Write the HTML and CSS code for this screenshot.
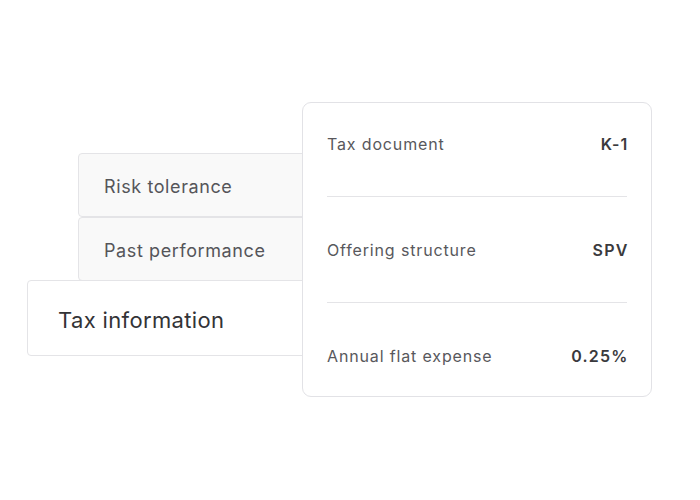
FILE: index.html
```html
<!DOCTYPE html>
<html>
<head>
<meta charset="utf-8">
<link rel="stylesheet" href="styles.css">
</head>
<body>
<div class="stage">
  <div class="tabs">
    <div class="tab tab-small">Risk tolerance</div>
    <div class="tab tab-small">Past performance</div>
    <div class="tab tab-active">Tax information</div>
  </div>
  <div class="card">
    <div class="row row-first"><span class="label">Tax document</span><span class="value">K-1</span></div>
    <div class="row"><span class="label">Offering structure</span><span class="value">SPV</span></div>
    <div class="row row-last"><span class="label">Annual flat expense</span><span class="value">0.25%</span></div>
  </div>
</div>
</body>
</html>
```
FILE: styles.css
```css
html, body {
  margin: 0;
  padding: 0;
  background: #ffffff;
}
body {
  font-family: Inter, "Noto Sans", sans-serif;
  width: 700px;
  height: 500px;
  overflow: hidden;
}
.stage {
  display: grid;
  grid-template-columns: 275px 18px 332px;
  padding: 102px 0 0 27px;
}
.tabs {
  grid-column: 1 / 3;
  grid-row: 1;
  margin-top: 51px;
  display: flex;
  flex-direction: column;
  align-items: flex-end;
}
.tab {
  box-sizing: border-box;
  border: 1px solid #e4e4e7;
  border-radius: 4px 0 0 4px;
  display: flex;
  align-items: center;
}
.tab-small {
  width: 242px;
  height: 64px;
  background: #f9f9f9;
  padding: 3px 0 0 25px;
  font-size: 18px;
  letter-spacing: 0.6px;
  color: #555559;
}
.tab-active {
  width: 293px;
  height: 76px;
  margin-top: -1px;
  background: #ffffff;
  padding: 4px 0 0 30px;
  font-size: 22px;
  letter-spacing: 0.35px;
  color: #333336;
}
.card {
  grid-column: 2 / 4;
  grid-row: 1;
  position: relative;
  z-index: 1;
  box-sizing: border-box;
  width: 350px;
  height: 295px;
  background: #ffffff;
  border: 1px solid #e2e2e6;
  border-radius: 9px;
  padding: 0 24px 0 24px;
  display: flex;
  flex-direction: column;
}
.row {
  display: flex;
  justify-content: space-between;
  align-items: center;
  height: 24px;
  padding: 41px 0 40px;
  border-bottom: 1px solid #e4e4e7;
  font-size: 16px;
  letter-spacing: 0.85px;
}
.row-first {
  padding-top: 29px;
}
.row-last {
  border-bottom: none;
  padding-bottom: 0;
}
.label {
  color: #58585c;
}
.value {
  color: #3a3a3d;
  font-weight: 600;
  letter-spacing: 1.2px;
  margin-right: -1.5px;
}
```
